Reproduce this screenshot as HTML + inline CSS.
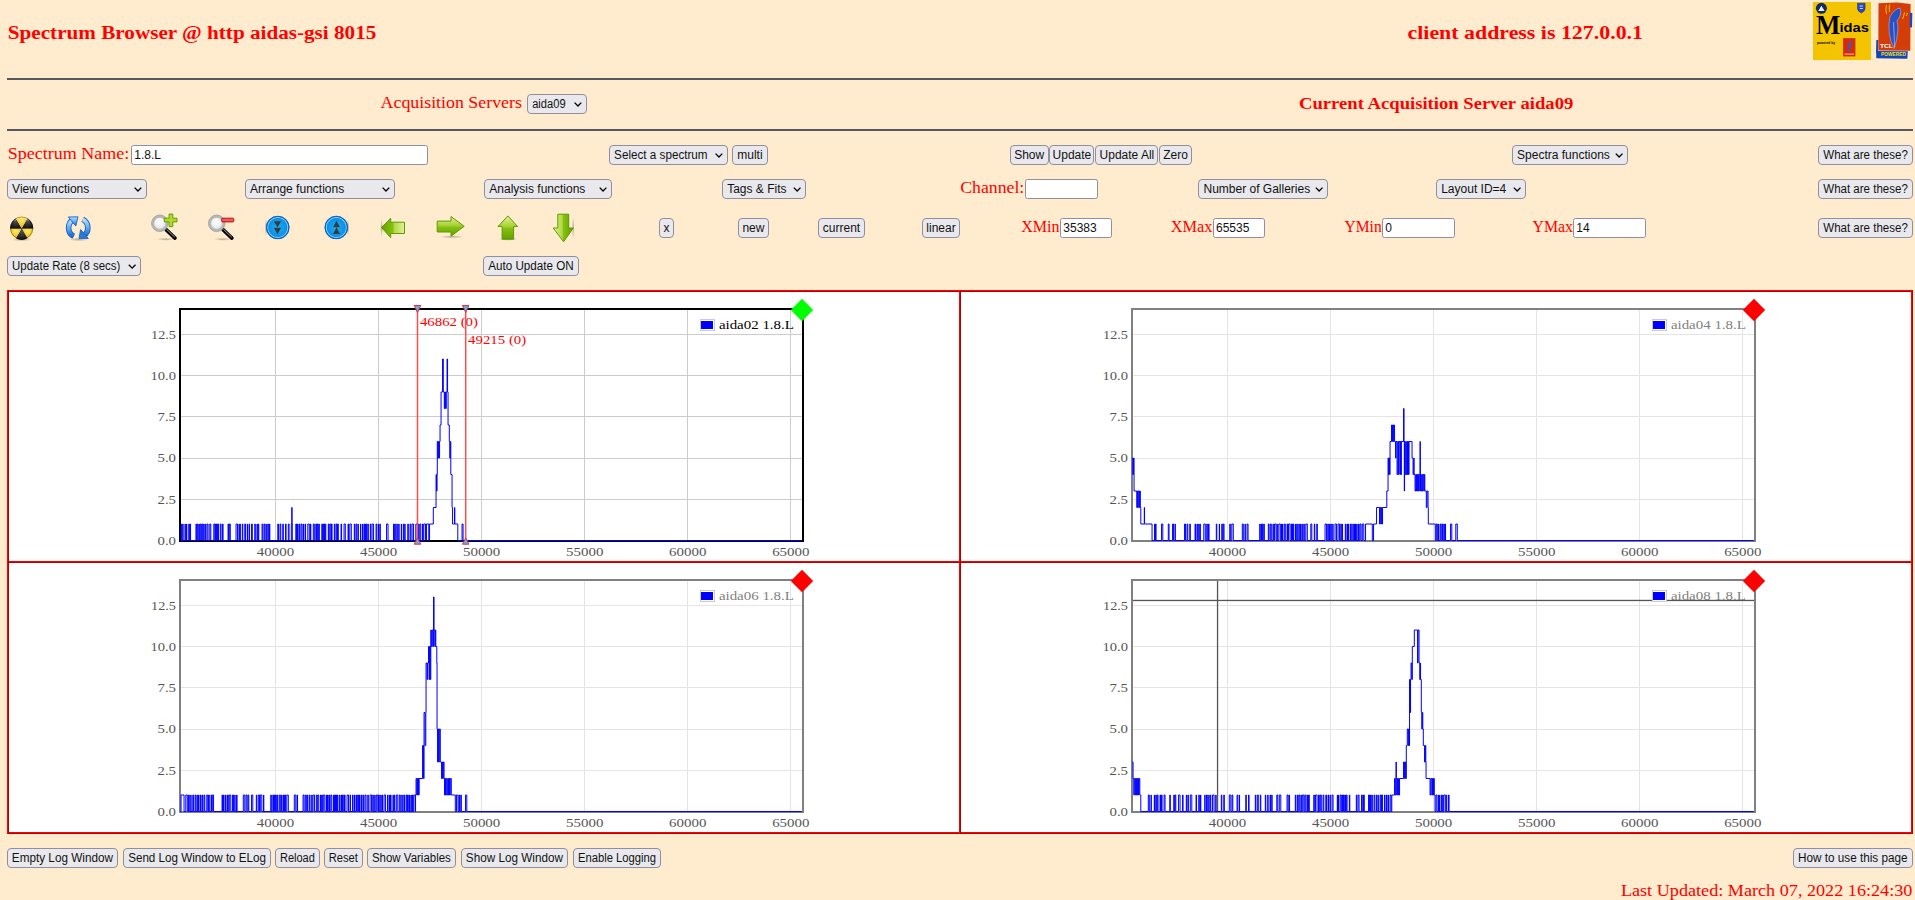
<!DOCTYPE html>
<html><head><meta charset="utf-8"><title>Spectrum Browser</title>
<style>html,body{margin:0;padding:0;background:#FFEBCD;overflow:hidden;width:1915px;height:900px}</style>
</head><body>
<svg width="1915" height="900" viewBox="0 0 1915 900" style="display:block">
<defs><linearGradient id="gArrowH" x1="0" y1="0" x2="0" y2="1"><stop offset="0" stop-color="#d8ec8a"/><stop offset="0.5" stop-color="#9fcc2a"/><stop offset="1" stop-color="#6aa300"/></linearGradient><linearGradient id="gArrowL" x1="0" y1="0" x2="1" y2="0"><stop offset="0" stop-color="#6aa300"/><stop offset="0.5" stop-color="#9fcc2a"/><stop offset="1" stop-color="#d8ec8a"/></linearGradient><linearGradient id="gArrowV" x1="0" y1="0" x2="1" y2="0"><stop offset="0" stop-color="#c6e06a"/><stop offset="0.5" stop-color="#8cc21a"/><stop offset="1" stop-color="#6aa300"/></linearGradient><radialGradient id="gBlue" cx="0.4" cy="0.35" r="0.7"><stop offset="0" stop-color="#5ec8ff"/><stop offset="0.7" stop-color="#1a8fe0"/><stop offset="1" stop-color="#0a5fb0"/></radialGradient><radialGradient id="gLens" cx="0.4" cy="0.35" r="0.7"><stop offset="0" stop-color="#ffffff"/><stop offset="1" stop-color="#d8d8d8"/></radialGradient><linearGradient id="gRefresh" x1="0" y1="0" x2="0" y2="1"><stop offset="0" stop-color="#9fd4ff"/><stop offset="1" stop-color="#1874d0"/></linearGradient></defs>
<rect x="0" y="0" width="1915" height="900" fill="#FFEBCD"/>
<text x="7.80" y="39.10" font-family="Liberation Serif" font-size="18.7" font-weight="bold" fill="#ff0000" text-anchor="start" textLength="368.50" lengthAdjust="spacingAndGlyphs">Spectrum Browser @ http aidas-gsi 8015</text>
<text x="1407.50" y="39.00" font-family="Liberation Serif" font-size="18.7" font-weight="bold" fill="#ff0000" text-anchor="start" textLength="235.50" lengthAdjust="spacingAndGlyphs">client address is 127.0.0.1</text>
<rect x="7" y="78" width="1906" height="2" fill="#55585e"/>
<rect x="7" y="129" width="1906" height="2" fill="#55585e"/>
<text x="380.60" y="108.00" font-family="Liberation Serif" font-size="16.5" font-weight="normal" fill="#ff0000" text-anchor="start" textLength="141.30" lengthAdjust="spacingAndGlyphs">Acquisition Servers</text>
<rect x="527.5" y="94.5" width="59" height="19" rx="3.5" fill="#e9e9ed" stroke="#8f8f9d" stroke-width="1"/>
<text x="532.20" y="107.80" font-family="Liberation Sans" font-size="12" font-weight="normal" fill="#111" text-anchor="start" textLength="33.40" lengthAdjust="spacingAndGlyphs">aida09</text>
<path d="M574.60 102.60 L577.95 106.05 L581.30 102.60" fill="none" stroke="#000" stroke-width="1.35"/>
<text x="1299.00" y="109.10" font-family="Liberation Serif" font-size="16.8" font-weight="bold" fill="#ff0000" text-anchor="start" textLength="274.30" lengthAdjust="spacingAndGlyphs">Current Acquisition Server aida09</text>
<text x="7.80" y="158.70" font-family="Liberation Serif" font-size="16.5" font-weight="normal" fill="#ff0000" text-anchor="start" textLength="121.40" lengthAdjust="spacingAndGlyphs">Spectrum Name:</text>
<rect x="131.5" y="145.5" width="296" height="19" rx="2" fill="#fff" stroke="#8f8f9d" stroke-width="1"/>
<text x="134.30" y="158.70" font-family="Liberation Sans" font-size="12" font-weight="normal" fill="#111" text-anchor="start">1.8.L</text>
<rect x="609.5" y="145.5" width="118" height="19" rx="3.5" fill="#e9e9ed" stroke="#8f8f9d" stroke-width="1"/>
<text x="614.10" y="158.80" font-family="Liberation Sans" font-size="12" font-weight="normal" fill="#111" text-anchor="start" textLength="93.50" lengthAdjust="spacingAndGlyphs">Select a spectrum</text>
<path d="M715.60 153.60 L718.95 157.05 L722.30 153.60" fill="none" stroke="#000" stroke-width="1.35"/>
<rect x="732.5" y="145.5" width="35" height="19" rx="3.5" fill="#e9e9ed" stroke="#8f8f9d" stroke-width="1"/>
<text x="749.90" y="158.80" font-family="Liberation Sans" font-size="12" font-weight="normal" fill="#111" text-anchor="middle">multi</text>
<rect x="1010.5" y="145.5" width="38" height="19" rx="3.5" fill="#e9e9ed" stroke="#8f8f9d" stroke-width="1"/>
<text x="1029.20" y="158.80" font-family="Liberation Sans" font-size="12" font-weight="normal" fill="#111" text-anchor="middle">Show</text>
<rect x="1049.5" y="145.5" width="44" height="19" rx="3.5" fill="#e9e9ed" stroke="#8f8f9d" stroke-width="1"/>
<text x="1071.90" y="158.80" font-family="Liberation Sans" font-size="12" font-weight="normal" fill="#111" text-anchor="middle">Update</text>
<rect x="1095.5" y="145.5" width="62" height="19" rx="3.5" fill="#e9e9ed" stroke="#8f8f9d" stroke-width="1"/>
<text x="1126.90" y="158.80" font-family="Liberation Sans" font-size="12" font-weight="normal" fill="#111" text-anchor="middle">Update All</text>
<rect x="1159.5" y="145.5" width="32" height="19" rx="3.5" fill="#e9e9ed" stroke="#8f8f9d" stroke-width="1"/>
<text x="1175.55" y="158.80" font-family="Liberation Sans" font-size="12" font-weight="normal" fill="#111" text-anchor="middle">Zero</text>
<rect x="1512.5" y="145.5" width="115" height="19" rx="3.5" fill="#e9e9ed" stroke="#8f8f9d" stroke-width="1"/>
<text x="1517.10" y="158.80" font-family="Liberation Sans" font-size="12" font-weight="normal" fill="#111" text-anchor="start">Spectra functions</text>
<path d="M1615.80 153.60 L1619.15 157.05 L1622.50 153.60" fill="none" stroke="#000" stroke-width="1.35"/>
<rect x="1818.5" y="145.5" width="94" height="19" rx="3.5" fill="#e9e9ed" stroke="#8f8f9d" stroke-width="1"/>
<text x="1865.55" y="158.80" font-family="Liberation Sans" font-size="12" font-weight="normal" fill="#111" text-anchor="middle" textLength="84.50" lengthAdjust="spacingAndGlyphs">What are these?</text>
<rect x="7.5" y="179.5" width="139" height="19" rx="3.5" fill="#e9e9ed" stroke="#8f8f9d" stroke-width="1"/>
<text x="12.10" y="192.80" font-family="Liberation Sans" font-size="12" font-weight="normal" fill="#111" text-anchor="start">View functions</text>
<path d="M134.60 187.60 L137.95 191.05 L141.30 187.60" fill="none" stroke="#000" stroke-width="1.35"/>
<rect x="245.5" y="179.5" width="149" height="19" rx="3.5" fill="#e9e9ed" stroke="#8f8f9d" stroke-width="1"/>
<text x="250.10" y="192.80" font-family="Liberation Sans" font-size="12" font-weight="normal" fill="#111" text-anchor="start">Arrange functions</text>
<path d="M382.60 187.60 L385.95 191.05 L389.30 187.60" fill="none" stroke="#000" stroke-width="1.35"/>
<rect x="484.5" y="179.5" width="127" height="19" rx="3.5" fill="#e9e9ed" stroke="#8f8f9d" stroke-width="1"/>
<text x="489.30" y="192.80" font-family="Liberation Sans" font-size="12" font-weight="normal" fill="#111" text-anchor="start">Analysis functions</text>
<path d="M599.70 187.60 L603.05 191.05 L606.40 187.60" fill="none" stroke="#000" stroke-width="1.35"/>
<rect x="722.5" y="179.5" width="83" height="19" rx="3.5" fill="#e9e9ed" stroke="#8f8f9d" stroke-width="1"/>
<text x="727.20" y="192.80" font-family="Liberation Sans" font-size="12" font-weight="normal" fill="#111" text-anchor="start">Tags &amp; Fits</text>
<path d="M793.80 187.60 L797.15 191.05 L800.50 187.60" fill="none" stroke="#000" stroke-width="1.35"/>
<text x="960.20" y="193.00" font-family="Liberation Serif" font-size="16.5" font-weight="normal" fill="#ff0000" text-anchor="start" textLength="64.10" lengthAdjust="spacingAndGlyphs">Channel:</text>
<rect x="1025.5" y="179.5" width="72" height="19" rx="2" fill="#fff" stroke="#8f8f9d" stroke-width="1"/>
<rect x="1198.5" y="179.5" width="129" height="19" rx="3.5" fill="#e9e9ed" stroke="#8f8f9d" stroke-width="1"/>
<text x="1203.50" y="192.80" font-family="Liberation Sans" font-size="12" font-weight="normal" fill="#111" text-anchor="start">Number of Galleries</text>
<path d="M1315.80 187.60 L1319.15 191.05 L1322.50 187.60" fill="none" stroke="#000" stroke-width="1.35"/>
<rect x="1436.5" y="179.5" width="89" height="19" rx="3.5" fill="#e9e9ed" stroke="#8f8f9d" stroke-width="1"/>
<text x="1441.20" y="192.80" font-family="Liberation Sans" font-size="12" font-weight="normal" fill="#111" text-anchor="start">Layout ID=4</text>
<path d="M1513.80 187.60 L1517.15 191.05 L1520.50 187.60" fill="none" stroke="#000" stroke-width="1.35"/>
<rect x="1818.5" y="179.5" width="94" height="19" rx="3.5" fill="#e9e9ed" stroke="#8f8f9d" stroke-width="1"/>
<text x="1865.55" y="192.80" font-family="Liberation Sans" font-size="12" font-weight="normal" fill="#111" text-anchor="middle" textLength="84.50" lengthAdjust="spacingAndGlyphs">What are these?</text>
<rect x="659.5" y="218.5" width="14" height="19" rx="3.5" fill="#e9e9ed" stroke="#8f8f9d" stroke-width="1"/>
<text x="666.45" y="231.80" font-family="Liberation Sans" font-size="12" font-weight="normal" fill="#111" text-anchor="middle">x</text>
<rect x="738.5" y="218.5" width="30" height="19" rx="3.5" fill="#e9e9ed" stroke="#8f8f9d" stroke-width="1"/>
<text x="753.40" y="231.80" font-family="Liberation Sans" font-size="12" font-weight="normal" fill="#111" text-anchor="middle">new</text>
<rect x="818.5" y="218.5" width="46" height="19" rx="3.5" fill="#e9e9ed" stroke="#8f8f9d" stroke-width="1"/>
<text x="841.50" y="231.80" font-family="Liberation Sans" font-size="12" font-weight="normal" fill="#111" text-anchor="middle">current</text>
<rect x="922.5" y="218.5" width="37" height="19" rx="3.5" fill="#e9e9ed" stroke="#8f8f9d" stroke-width="1"/>
<text x="941.00" y="231.80" font-family="Liberation Sans" font-size="12" font-weight="normal" fill="#111" text-anchor="middle">linear</text>
<text x="1021.30" y="231.90" font-family="Liberation Serif" font-size="16.3" font-weight="normal" fill="#ff0000" text-anchor="start" textLength="38.30" lengthAdjust="spacingAndGlyphs">XMin</text>
<rect x="1060.5" y="218.5" width="51" height="19" rx="2" fill="#fff" stroke="#8f8f9d" stroke-width="1"/>
<text x="1063.30" y="231.80" font-family="Liberation Sans" font-size="12" font-weight="normal" fill="#111" text-anchor="start">35383</text>
<text x="1170.70" y="231.90" font-family="Liberation Serif" font-size="16.3" font-weight="normal" fill="#ff0000" text-anchor="start" textLength="41.60" lengthAdjust="spacingAndGlyphs">XMax</text>
<rect x="1213.5" y="218.5" width="51" height="19" rx="2" fill="#fff" stroke="#8f8f9d" stroke-width="1"/>
<text x="1216.00" y="231.80" font-family="Liberation Sans" font-size="12" font-weight="normal" fill="#111" text-anchor="start">65535</text>
<text x="1344.60" y="231.90" font-family="Liberation Serif" font-size="16.3" font-weight="normal" fill="#ff0000" text-anchor="start" textLength="37.10" lengthAdjust="spacingAndGlyphs">YMin</text>
<rect x="1382.5" y="218.5" width="72" height="19" rx="2" fill="#fff" stroke="#8f8f9d" stroke-width="1"/>
<text x="1385.20" y="231.80" font-family="Liberation Sans" font-size="12" font-weight="normal" fill="#111" text-anchor="start">0</text>
<text x="1532.50" y="231.90" font-family="Liberation Serif" font-size="16.3" font-weight="normal" fill="#ff0000" text-anchor="start" textLength="40.50" lengthAdjust="spacingAndGlyphs">YMax</text>
<rect x="1573.5" y="218.5" width="72" height="19" rx="2" fill="#fff" stroke="#8f8f9d" stroke-width="1"/>
<text x="1576.30" y="231.80" font-family="Liberation Sans" font-size="12" font-weight="normal" fill="#111" text-anchor="start">14</text>
<rect x="1818.5" y="218.5" width="94" height="19" rx="3.5" fill="#e9e9ed" stroke="#8f8f9d" stroke-width="1"/>
<text x="1865.55" y="231.80" font-family="Liberation Sans" font-size="12" font-weight="normal" fill="#111" text-anchor="middle" textLength="84.50" lengthAdjust="spacingAndGlyphs">What are these?</text>
<rect x="7.5" y="256.5" width="133" height="19" rx="3.5" fill="#e9e9ed" stroke="#8f8f9d" stroke-width="1"/>
<text x="12.10" y="269.90" font-family="Liberation Sans" font-size="12" font-weight="normal" fill="#111" text-anchor="start" textLength="108.20" lengthAdjust="spacingAndGlyphs">Update Rate (8 secs)</text>
<path d="M128.80 264.70 L132.15 268.15 L135.50 264.70" fill="none" stroke="#000" stroke-width="1.35"/>
<rect x="483.5" y="256.5" width="95" height="19" rx="3.5" fill="#e9e9ed" stroke="#8f8f9d" stroke-width="1"/>
<text x="530.95" y="269.90" font-family="Liberation Sans" font-size="12" font-weight="normal" fill="#111" text-anchor="middle" textLength="85.50" lengthAdjust="spacingAndGlyphs">Auto Update ON</text>
<rect x="7.5" y="848.5" width="110" height="19" rx="3.5" fill="#e9e9ed" stroke="#8f8f9d" stroke-width="1"/>
<text x="62.40" y="861.90" font-family="Liberation Sans" font-size="12" font-weight="normal" fill="#111" text-anchor="middle" textLength="101.10" lengthAdjust="spacingAndGlyphs">Empty Log Window</text>
<rect x="123.5" y="848.5" width="147" height="19" rx="3.5" fill="#e9e9ed" stroke="#8f8f9d" stroke-width="1"/>
<text x="197.10" y="861.90" font-family="Liberation Sans" font-size="12" font-weight="normal" fill="#111" text-anchor="middle" textLength="137.90" lengthAdjust="spacingAndGlyphs">Send Log Window to ELog</text>
<rect x="275.5" y="848.5" width="44" height="19" rx="3.5" fill="#e9e9ed" stroke="#8f8f9d" stroke-width="1"/>
<text x="297.40" y="861.90" font-family="Liberation Sans" font-size="12" font-weight="normal" fill="#111" text-anchor="middle" textLength="34.90" lengthAdjust="spacingAndGlyphs">Reload</text>
<rect x="324.5" y="848.5" width="38" height="19" rx="3.5" fill="#e9e9ed" stroke="#8f8f9d" stroke-width="1"/>
<text x="343.30" y="861.90" font-family="Liberation Sans" font-size="12" font-weight="normal" fill="#111" text-anchor="middle" textLength="29.10" lengthAdjust="spacingAndGlyphs">Reset</text>
<rect x="367.5" y="848.5" width="88" height="19" rx="3.5" fill="#e9e9ed" stroke="#8f8f9d" stroke-width="1"/>
<text x="411.40" y="861.90" font-family="Liberation Sans" font-size="12" font-weight="normal" fill="#111" text-anchor="middle" textLength="78.90" lengthAdjust="spacingAndGlyphs">Show Variables</text>
<rect x="461.5" y="848.5" width="106" height="19" rx="3.5" fill="#e9e9ed" stroke="#8f8f9d" stroke-width="1"/>
<text x="514.40" y="861.90" font-family="Liberation Sans" font-size="12" font-weight="normal" fill="#111" text-anchor="middle" textLength="97.10" lengthAdjust="spacingAndGlyphs">Show Log Window</text>
<rect x="573.5" y="848.5" width="87" height="19" rx="3.5" fill="#e9e9ed" stroke="#8f8f9d" stroke-width="1"/>
<text x="617.05" y="861.90" font-family="Liberation Sans" font-size="12" font-weight="normal" fill="#111" text-anchor="middle" textLength="78.20" lengthAdjust="spacingAndGlyphs">Enable Logging</text>
<rect x="1793.5" y="848.5" width="119" height="19" rx="3.5" fill="#e9e9ed" stroke="#8f8f9d" stroke-width="1"/>
<text x="1852.80" y="861.90" font-family="Liberation Sans" font-size="12" font-weight="normal" fill="#111" text-anchor="middle" textLength="109.70" lengthAdjust="spacingAndGlyphs">How to use this page</text>
<text x="1620.90" y="895.70" font-family="Liberation Serif" font-size="16.5" font-weight="normal" fill="#ff0000" text-anchor="start" textLength="291.50" lengthAdjust="spacingAndGlyphs">Last Updated: March 07, 2022 16:24:30</text>
<rect x="9" y="292" width="1902" height="540" fill="#fff"/>
<rect x="7" y="290" width="1906" height="1" fill="#ff0000"/><rect x="7" y="291" width="1906" height="1" fill="#b40000"/>
<rect x="7" y="832" width="1906" height="1" fill="#ff0000"/><rect x="7" y="833" width="1906" height="1" fill="#b40000"/>
<rect x="7" y="561" width="1906" height="1" fill="#ff0000"/><rect x="7" y="562" width="1906" height="1" fill="#b40000"/>
<rect x="7" y="290" width="1" height="544" fill="#ff0000"/><rect x="8" y="290" width="1" height="544" fill="#b40000"/>
<rect x="959" y="290" width="1" height="544" fill="#ff0000"/><rect x="960" y="290" width="1" height="544" fill="#b40000"/>
<rect x="1911" y="290" width="1" height="544" fill="#ff0000"/><rect x="1912" y="290" width="1" height="544" fill="#b40000"/>
<rect x="275" y="309" width="1" height="232" fill="#cccccc"/>
<rect x="378" y="309" width="1" height="232" fill="#cccccc"/>
<rect x="481" y="309" width="1" height="232" fill="#cccccc"/>
<rect x="584" y="309" width="1" height="232" fill="#cccccc"/>
<rect x="687" y="309" width="1" height="232" fill="#cccccc"/>
<rect x="790" y="309" width="1" height="232" fill="#cccccc"/>
<rect x="180" y="499" width="623" height="1" fill="#cccccc"/>
<rect x="180" y="458" width="623" height="1" fill="#cccccc"/>
<rect x="180" y="416" width="623" height="1" fill="#cccccc"/>
<rect x="180" y="375" width="623" height="1" fill="#cccccc"/>
<rect x="180" y="334" width="623" height="1" fill="#cccccc"/>
<text x="157.50" y="544.90" font-family="Liberation Serif" font-size="11.5" font-weight="normal" fill="#555" text-anchor="start" textLength="18.50" lengthAdjust="spacingAndGlyphs">0.0</text>
<text x="157.50" y="503.65" font-family="Liberation Serif" font-size="11.5" font-weight="normal" fill="#555" text-anchor="start" textLength="18.50" lengthAdjust="spacingAndGlyphs">2.5</text>
<text x="157.50" y="462.40" font-family="Liberation Serif" font-size="11.5" font-weight="normal" fill="#555" text-anchor="start" textLength="18.50" lengthAdjust="spacingAndGlyphs">5.0</text>
<text x="157.50" y="421.15" font-family="Liberation Serif" font-size="11.5" font-weight="normal" fill="#555" text-anchor="start" textLength="18.50" lengthAdjust="spacingAndGlyphs">7.5</text>
<text x="150.50" y="379.90" font-family="Liberation Serif" font-size="11.5" font-weight="normal" fill="#555" text-anchor="start" textLength="25.50" lengthAdjust="spacingAndGlyphs">10.0</text>
<text x="151.00" y="338.65" font-family="Liberation Serif" font-size="11.5" font-weight="normal" fill="#555" text-anchor="start" textLength="25.00" lengthAdjust="spacingAndGlyphs">12.5</text>
<text x="256.87" y="556.00" font-family="Liberation Serif" font-size="11.5" font-weight="normal" fill="#555" text-anchor="start" textLength="37.30" lengthAdjust="spacingAndGlyphs">40000</text>
<text x="359.93" y="556.00" font-family="Liberation Serif" font-size="11.5" font-weight="normal" fill="#555" text-anchor="start" textLength="37.30" lengthAdjust="spacingAndGlyphs">45000</text>
<text x="462.99" y="556.00" font-family="Liberation Serif" font-size="11.5" font-weight="normal" fill="#555" text-anchor="start" textLength="37.30" lengthAdjust="spacingAndGlyphs">50000</text>
<text x="566.05" y="556.00" font-family="Liberation Serif" font-size="11.5" font-weight="normal" fill="#555" text-anchor="start" textLength="37.30" lengthAdjust="spacingAndGlyphs">55000</text>
<text x="669.11" y="556.00" font-family="Liberation Serif" font-size="11.5" font-weight="normal" fill="#555" text-anchor="start" textLength="37.30" lengthAdjust="spacingAndGlyphs">60000</text>
<text x="772.17" y="556.00" font-family="Liberation Serif" font-size="11.5" font-weight="normal" fill="#555" text-anchor="start" textLength="37.30" lengthAdjust="spacingAndGlyphs">65000</text>
<rect x="180" y="309" width="623" height="232" fill="none" stroke="#000" stroke-width="2"/>
<path d="M180.30 540.50H181.30V524.00H181.80V540.50H182.80V524.00H183.05V540.50H185.05V524.00H185.30V540.50H186.55V524.00H186.80V540.50H188.80V524.00H189.30V540.50H190.05V524.00H190.55V540.50H196.05V524.00H196.30V540.50H197.30V524.00H198.05V540.50H199.05V524.00H199.30V540.50H200.30V524.00H201.30V540.50H202.05V524.00H202.80V540.50H203.80V524.00H204.05V540.50H205.30V524.00H205.80V540.50H207.05V524.00H208.05V540.50H209.80V524.00H210.80V540.50H213.80V524.00H214.80V540.50H215.55V524.00H216.55V540.50H217.55V524.00H218.55V540.50H220.30V524.00H221.05V540.50H222.55V524.00H223.05V540.50H228.05V524.00H228.55V540.50H229.30V524.00H230.30V540.50H236.05V524.00H237.55V540.50H239.05V524.00H239.30V540.50H240.05V524.00H240.30V540.50H242.30V524.00H242.80V540.50H244.80V524.00H245.55V540.50H247.30V524.00H247.55V540.50H249.05V524.00H249.55V540.50H251.55V524.00H252.30V540.50H254.80V524.00H255.30V540.50H257.05V524.00H257.30V540.50H258.30V524.00H258.80V540.50H262.05V524.00H262.80V540.50H264.05V524.00H264.80V540.50H266.05V524.00H266.30V540.50H267.80V524.00H268.30V540.50H269.55V524.00H269.80V540.50H277.80V524.00H278.55V540.50H280.05V524.00H280.80V540.50H282.80V524.00H283.30V540.50H285.55V524.00H286.05V540.50H288.30V524.00H289.05V540.50H291.30V524.00H291.80V507.50H292.05V524.00H292.30V540.50H295.80V524.00H296.55V540.50H297.55V524.00H298.05V540.50H299.30V524.00H299.80V540.50H301.05V524.00H302.05V540.50H303.30V524.00H303.55V540.50H305.05V524.00H305.55V540.50H307.80V524.00H309.30V540.50H310.55V524.00H310.80V540.50H313.30V524.00H314.30V540.50H315.80V524.00H316.55V540.50H317.30V524.00H318.05V540.50H318.80V524.00H319.30V540.50H321.80V524.00H322.55V540.50H323.55V524.00H324.55V540.50H325.30V524.00H325.80V540.50H328.30V524.00H328.80V540.50H329.80V524.00H330.80V540.50H331.55V524.00H332.05V540.50H334.30V524.00H334.80V540.50H336.05V524.00H336.80V540.50H337.55V524.00H338.30V540.50H341.05V524.00H341.55V540.50H344.05V524.00H345.30V540.50H348.05V524.00H348.55V540.50H349.80V524.00H351.30V540.50H354.30V524.00H354.80V540.50H356.05V524.00H356.80V540.50H358.05V524.00H358.30V540.50H360.55V524.00H360.80V540.50H362.55V524.00H362.80V540.50H364.05V524.00H364.55V540.50H365.55V524.00H366.55V540.50H367.80V524.00H368.30V540.50H370.30V524.00H370.80V540.50H372.05V524.00H373.55V540.50H376.05V524.00H376.80V540.50H378.30V524.00H378.55V540.50H379.80V524.00H380.30V540.50H386.55V524.00H388.05V540.50H393.55V524.00H394.05V540.50H394.80V524.00H395.30V540.50H396.80V524.00H397.30V540.50H398.80V524.00H399.05V540.50H401.30V524.00H401.55V540.50H403.30V524.00H403.80V540.50H404.80V524.00H405.05V540.50H407.80V524.00H408.30V540.50H410.05V524.00H410.80V540.50H412.05V524.00H413.55V540.50H415.80V524.00H417.30V540.50H418.30V524.00H418.80V540.50H419.80V524.00H420.80V540.50H422.55V524.00H423.05V540.50H423.80V524.00H425.55V540.50H426.55V524.00H428.80V540.50H429.55V524.00H433.30V507.50H436.05V474.50H436.55V491.00H437.05V474.50H437.30V441.50H437.80V458.00H438.30V441.50H438.80V458.00H439.55V441.50H440.05V425.00H441.05V392.00H442.55V359.00H443.30V392.00H444.30V408.50H444.80V392.00H445.55V408.50H446.30V392.00H447.05V359.00H447.55V392.00H448.05V425.00H449.30V441.50H449.80V458.00H450.30V441.50H450.80V474.50H452.05V507.50H452.55V524.00H454.55V507.50H454.80V524.00H457.80V540.50H462.05V524.00H463.05V540.50H801.80" fill="none" stroke="#0000ff" stroke-width="1"/>
<rect x="416.75" y="306" width="1.5" height="236" fill="#ff4d4d"/>
<path d="M414.3 305.5 L420.7 305.5 L417.5 312.5 Z" fill="#6aaedc" stroke="#e03040" stroke-width="1"/>
<path d="M414.3 544.2 L420.7 544.2 L417.5 537.8 Z" fill="#6aaedc" stroke="#e03040" stroke-width="1"/>
<text x="419.90" y="325.80" font-family="Liberation Serif" font-size="11.5" font-weight="normal" fill="#ff0000" text-anchor="start" textLength="58.10" lengthAdjust="spacingAndGlyphs">46862 (0)</text>
<rect x="464.95" y="306" width="1.5" height="236" fill="#ff4d4d"/>
<path d="M462.5 305.5 L468.9 305.5 L465.7 312.5 Z" fill="#6aaedc" stroke="#e03040" stroke-width="1"/>
<path d="M462.5 544.2 L468.9 544.2 L465.7 537.8 Z" fill="#6aaedc" stroke="#e03040" stroke-width="1"/>
<text x="468.10" y="343.60" font-family="Liberation Serif" font-size="11.5" font-weight="normal" fill="#ff0000" text-anchor="start" textLength="58.10" lengthAdjust="spacingAndGlyphs">49215 (0)</text>
<rect x="700.5" y="319.5" width="14" height="11" fill="#fff" stroke="#ccc" stroke-width="1"/>
<rect x="701" y="321" width="12" height="8" fill="#0000ff"/>
<text x="718.90" y="328.70" font-family="Liberation Serif" font-size="11.5" font-weight="normal" fill="#000" text-anchor="start" textLength="75.00" lengthAdjust="spacingAndGlyphs">aida02 1.8.L</text>
<path d="M802 298.8 L813.2 310 L802 321.2 L790.8 310 Z" fill="#00ff00"/>
<rect x="1227" y="309" width="1" height="232" fill="#e4e4e4"/>
<rect x="1330" y="309" width="1" height="232" fill="#e4e4e4"/>
<rect x="1433" y="309" width="1" height="232" fill="#e4e4e4"/>
<rect x="1536" y="309" width="1" height="232" fill="#e4e4e4"/>
<rect x="1639" y="309" width="1" height="232" fill="#e4e4e4"/>
<rect x="1742" y="309" width="1" height="232" fill="#e4e4e4"/>
<rect x="1132" y="499" width="623" height="1" fill="#e4e4e4"/>
<rect x="1132" y="458" width="623" height="1" fill="#e4e4e4"/>
<rect x="1132" y="416" width="623" height="1" fill="#e4e4e4"/>
<rect x="1132" y="375" width="623" height="1" fill="#e4e4e4"/>
<rect x="1132" y="334" width="623" height="1" fill="#e4e4e4"/>
<text x="1109.50" y="544.90" font-family="Liberation Serif" font-size="11.5" font-weight="normal" fill="#555" text-anchor="start" textLength="18.50" lengthAdjust="spacingAndGlyphs">0.0</text>
<text x="1109.50" y="503.65" font-family="Liberation Serif" font-size="11.5" font-weight="normal" fill="#555" text-anchor="start" textLength="18.50" lengthAdjust="spacingAndGlyphs">2.5</text>
<text x="1109.50" y="462.40" font-family="Liberation Serif" font-size="11.5" font-weight="normal" fill="#555" text-anchor="start" textLength="18.50" lengthAdjust="spacingAndGlyphs">5.0</text>
<text x="1109.50" y="421.15" font-family="Liberation Serif" font-size="11.5" font-weight="normal" fill="#555" text-anchor="start" textLength="18.50" lengthAdjust="spacingAndGlyphs">7.5</text>
<text x="1102.50" y="379.90" font-family="Liberation Serif" font-size="11.5" font-weight="normal" fill="#555" text-anchor="start" textLength="25.50" lengthAdjust="spacingAndGlyphs">10.0</text>
<text x="1103.00" y="338.65" font-family="Liberation Serif" font-size="11.5" font-weight="normal" fill="#555" text-anchor="start" textLength="25.00" lengthAdjust="spacingAndGlyphs">12.5</text>
<text x="1208.87" y="556.00" font-family="Liberation Serif" font-size="11.5" font-weight="normal" fill="#555" text-anchor="start" textLength="37.30" lengthAdjust="spacingAndGlyphs">40000</text>
<text x="1311.93" y="556.00" font-family="Liberation Serif" font-size="11.5" font-weight="normal" fill="#555" text-anchor="start" textLength="37.30" lengthAdjust="spacingAndGlyphs">45000</text>
<text x="1414.99" y="556.00" font-family="Liberation Serif" font-size="11.5" font-weight="normal" fill="#555" text-anchor="start" textLength="37.30" lengthAdjust="spacingAndGlyphs">50000</text>
<text x="1518.05" y="556.00" font-family="Liberation Serif" font-size="11.5" font-weight="normal" fill="#555" text-anchor="start" textLength="37.30" lengthAdjust="spacingAndGlyphs">55000</text>
<text x="1621.11" y="556.00" font-family="Liberation Serif" font-size="11.5" font-weight="normal" fill="#555" text-anchor="start" textLength="37.30" lengthAdjust="spacingAndGlyphs">60000</text>
<text x="1724.17" y="556.00" font-family="Liberation Serif" font-size="11.5" font-weight="normal" fill="#555" text-anchor="start" textLength="37.30" lengthAdjust="spacingAndGlyphs">65000</text>
<rect x="1132" y="309" width="623" height="232" fill="none" stroke="#808080" stroke-width="2"/>
<path d="M1132.30 458.00H1132.80V474.50H1133.55V458.00H1134.05V491.00H1136.80V507.50H1137.30V491.00H1137.80V507.50H1138.30V491.00H1139.30V507.50H1139.80V491.00H1140.30V507.50H1140.80V524.00H1144.30V507.50H1144.55V524.00H1152.05V540.50H1154.55V524.00H1154.80V540.50H1155.55V524.00H1156.05V540.50H1161.55V524.00H1162.80V540.50H1168.30V524.00H1169.05V540.50H1172.55V524.00H1173.55V540.50H1175.05V524.00H1175.30V540.50H1184.55V524.00H1185.55V540.50H1187.05V524.00H1187.80V540.50H1189.80V524.00H1190.30V540.50H1195.05V524.00H1195.55V540.50H1197.05V524.00H1197.30V540.50H1198.80V524.00H1199.05V540.50H1200.05V524.00H1200.30V540.50H1203.80V524.00H1205.30V540.50H1206.80V524.00H1207.30V540.50H1208.55V524.00H1209.05V540.50H1216.30V524.00H1216.80V540.50H1219.30V524.00H1219.55V540.50H1221.80V524.00H1222.30V540.50H1223.30V524.00H1224.05V540.50H1229.80V524.00H1230.30V540.50H1231.80V524.00H1233.30V540.50H1242.30V524.00H1243.30V540.50H1245.05V524.00H1245.30V540.50H1247.05V524.00H1248.05V540.50H1259.80V524.00H1260.05V540.50H1261.05V524.00H1261.55V540.50H1262.30V524.00H1262.80V540.50H1263.80V524.00H1264.30V540.50H1268.30V524.00H1269.05V540.50H1270.30V524.00H1271.30V540.50H1273.05V524.00H1273.30V540.50H1274.55V524.00H1276.05V540.50H1277.05V524.00H1277.30V540.50H1278.80V524.00H1280.30V540.50H1281.30V524.00H1281.55V540.50H1282.55V524.00H1282.80V540.50H1284.30V524.00H1285.30V540.50H1287.05V524.00H1287.55V540.50H1288.55V524.00H1290.05V540.50H1291.30V524.00H1291.80V540.50H1292.05V524.00H1292.55V540.50H1293.30V524.00H1293.80V540.50H1295.55V524.00H1295.80V540.50H1296.80V524.00H1297.30V540.50H1298.80V524.00H1299.30V540.50H1300.55V524.00H1300.80V540.50H1302.05V524.00H1302.30V540.50H1303.80V524.00H1304.30V540.50H1305.80V524.00H1307.30V540.50H1310.80V524.00H1311.80V540.50H1314.30V524.00H1314.80V540.50H1316.80V524.00H1317.30V540.50H1325.05V524.00H1326.55V540.50H1327.80V524.00H1328.30V540.50H1329.55V524.00H1329.80V540.50H1330.80V524.00H1331.30V540.50H1332.80V524.00H1333.05V540.50H1335.05V524.00H1336.55V540.50H1338.05V524.00H1339.55V540.50H1340.80V524.00H1341.30V540.50H1342.30V524.00H1342.55V540.50H1345.30V524.00H1345.80V540.50H1347.05V524.00H1347.55V540.50H1348.55V524.00H1348.80V540.50H1350.55V524.00H1351.30V540.50H1352.80V524.00H1353.30V540.50H1354.55V524.00H1354.80V540.50H1355.55V524.00H1355.80V540.50H1356.80V524.00H1357.05V540.50H1358.55V524.00H1359.05V540.50H1360.05V524.00H1361.05V540.50H1362.30V524.00H1363.80V540.50H1365.55V524.00H1372.30V540.50H1373.55V524.00H1376.55V507.50H1379.55V524.00H1380.05V507.50H1380.80V524.00H1381.30V507.50H1381.80V524.00H1382.55V507.50H1386.80V491.00H1388.05V458.00H1388.55V474.50H1389.05V458.00H1389.55V474.50H1390.05V441.50H1391.55V425.00H1392.05V441.50H1392.55V425.00H1393.30V441.50H1393.80V425.00H1394.55V441.50H1395.55V458.00H1396.05V441.50H1397.05V474.50H1397.80V441.50H1398.55V474.50H1399.05V441.50H1400.05V474.50H1400.55V441.50H1401.05V474.50H1401.30V441.50H1403.55V408.50H1404.05V441.50H1404.30V491.00H1404.55V441.50H1405.05V474.50H1405.80V441.50H1406.30V474.50H1407.05V441.50H1407.55V474.50H1408.05V441.50H1408.55V474.50H1409.05V441.50H1412.05V458.00H1413.05V474.50H1413.80V458.00H1414.05V474.50H1415.05V491.00H1415.80V474.50H1416.30V491.00H1416.80V474.50H1417.30V491.00H1417.80V474.50H1418.55V491.00H1419.30V474.50H1420.05V441.50H1420.30V491.00H1420.55V474.50H1421.05V491.00H1421.80V474.50H1422.30V491.00H1423.05V474.50H1423.80V491.00H1424.30V474.50H1424.80V491.00H1426.30V507.50H1427.05V491.00H1428.05V507.50H1428.30V524.00H1435.30V540.50H1436.30V524.00H1437.30V540.50H1438.30V524.00H1438.55V540.50H1440.05V524.00H1440.80V540.50H1441.80V524.00H1442.55V540.50H1443.80V524.00H1444.30V540.50H1445.05V524.00H1445.55V540.50H1450.55V524.00H1451.80V540.50H1455.80V524.00H1457.30V540.50H1753.80" fill="none" stroke="#0000ff" stroke-width="1"/>
<rect x="1652.5" y="319.5" width="14" height="11" fill="#fff" stroke="#ccc" stroke-width="1"/>
<rect x="1653" y="321" width="12" height="8" fill="#0000ff"/>
<text x="1670.90" y="328.70" font-family="Liberation Serif" font-size="11.5" font-weight="normal" fill="#808080" text-anchor="start" textLength="75.00" lengthAdjust="spacingAndGlyphs">aida04 1.8.L</text>
<path d="M1754 298.8 L1765.2 310 L1754 321.2 L1742.8 310 Z" fill="#ff0000"/>
<rect x="275" y="580" width="1" height="232" fill="#e4e4e4"/>
<rect x="378" y="580" width="1" height="232" fill="#e4e4e4"/>
<rect x="481" y="580" width="1" height="232" fill="#e4e4e4"/>
<rect x="584" y="580" width="1" height="232" fill="#e4e4e4"/>
<rect x="687" y="580" width="1" height="232" fill="#e4e4e4"/>
<rect x="790" y="580" width="1" height="232" fill="#e4e4e4"/>
<rect x="180" y="770" width="623" height="1" fill="#e4e4e4"/>
<rect x="180" y="729" width="623" height="1" fill="#e4e4e4"/>
<rect x="180" y="687" width="623" height="1" fill="#e4e4e4"/>
<rect x="180" y="646" width="623" height="1" fill="#e4e4e4"/>
<rect x="180" y="605" width="623" height="1" fill="#e4e4e4"/>
<text x="157.50" y="815.90" font-family="Liberation Serif" font-size="11.5" font-weight="normal" fill="#555" text-anchor="start" textLength="18.50" lengthAdjust="spacingAndGlyphs">0.0</text>
<text x="157.50" y="774.65" font-family="Liberation Serif" font-size="11.5" font-weight="normal" fill="#555" text-anchor="start" textLength="18.50" lengthAdjust="spacingAndGlyphs">2.5</text>
<text x="157.50" y="733.40" font-family="Liberation Serif" font-size="11.5" font-weight="normal" fill="#555" text-anchor="start" textLength="18.50" lengthAdjust="spacingAndGlyphs">5.0</text>
<text x="157.50" y="692.15" font-family="Liberation Serif" font-size="11.5" font-weight="normal" fill="#555" text-anchor="start" textLength="18.50" lengthAdjust="spacingAndGlyphs">7.5</text>
<text x="150.50" y="650.90" font-family="Liberation Serif" font-size="11.5" font-weight="normal" fill="#555" text-anchor="start" textLength="25.50" lengthAdjust="spacingAndGlyphs">10.0</text>
<text x="151.00" y="609.65" font-family="Liberation Serif" font-size="11.5" font-weight="normal" fill="#555" text-anchor="start" textLength="25.00" lengthAdjust="spacingAndGlyphs">12.5</text>
<text x="256.87" y="827.00" font-family="Liberation Serif" font-size="11.5" font-weight="normal" fill="#555" text-anchor="start" textLength="37.30" lengthAdjust="spacingAndGlyphs">40000</text>
<text x="359.93" y="827.00" font-family="Liberation Serif" font-size="11.5" font-weight="normal" fill="#555" text-anchor="start" textLength="37.30" lengthAdjust="spacingAndGlyphs">45000</text>
<text x="462.99" y="827.00" font-family="Liberation Serif" font-size="11.5" font-weight="normal" fill="#555" text-anchor="start" textLength="37.30" lengthAdjust="spacingAndGlyphs">50000</text>
<text x="566.05" y="827.00" font-family="Liberation Serif" font-size="11.5" font-weight="normal" fill="#555" text-anchor="start" textLength="37.30" lengthAdjust="spacingAndGlyphs">55000</text>
<text x="669.11" y="827.00" font-family="Liberation Serif" font-size="11.5" font-weight="normal" fill="#555" text-anchor="start" textLength="37.30" lengthAdjust="spacingAndGlyphs">60000</text>
<text x="772.17" y="827.00" font-family="Liberation Serif" font-size="11.5" font-weight="normal" fill="#555" text-anchor="start" textLength="37.30" lengthAdjust="spacingAndGlyphs">65000</text>
<rect x="180" y="580" width="623" height="232" fill="none" stroke="#808080" stroke-width="2"/>
<path d="M180.30 811.50H181.05V795.00H184.05V811.50H185.80V795.00H187.30V811.50H188.55V795.00H189.30V811.50H190.80V795.00H191.05V811.50H192.80V795.00H193.55V811.50H195.05V795.00H195.80V811.50H197.05V795.00H197.30V811.50H198.55V795.00H199.05V811.50H200.55V795.00H201.05V811.50H202.30V795.00H202.80V811.50H204.05V795.00H204.80V811.50H206.80V795.00H207.80V811.50H208.55V795.00H209.30V811.50H211.05V795.00H211.55V811.50H212.30V795.00H213.55V811.50H222.05V795.00H222.55V811.50H223.55V795.00H224.05V811.50H225.55V795.00H226.05V811.50H227.55V795.00H228.30V811.50H229.30V795.00H230.80V811.50H232.55V795.00H233.55V811.50H234.80V795.00H235.05V811.50H236.55V795.00H237.05V811.50H243.30V795.00H244.80V811.50H246.05V795.00H247.05V811.50H248.05V795.00H248.80V811.50H251.55V795.00H252.80V811.50H256.30V795.00H256.80V811.50H258.30V795.00H259.55V811.50H260.30V795.00H261.80V811.50H263.55V795.00H263.80V811.50H270.80V795.00H271.30V811.50H272.80V795.00H273.55V811.50H274.30V795.00H274.80V811.50H275.55V795.00H276.30V811.50H277.30V795.00H277.80V811.50H279.30V795.00H280.30V811.50H281.30V795.00H281.80V811.50H283.05V795.00H283.55V811.50H284.55V795.00H285.55V811.50H286.80V795.00H288.30V811.50H294.30V795.00H295.80V811.50H297.05V795.00H297.55V811.50H303.05V795.00H304.05V811.50H305.30V795.00H306.30V811.50H307.30V795.00H307.80V811.50H309.30V795.00H310.05V811.50H311.80V795.00H312.05V811.50H313.05V795.00H314.55V811.50H316.30V795.00H317.05V811.50H317.80V795.00H318.80V811.50H320.55V795.00H321.05V811.50H321.80V795.00H322.30V811.50H323.30V795.00H324.80V811.50H326.30V795.00H326.55V811.50H327.55V795.00H328.05V811.50H329.05V795.00H329.55V811.50H330.80V795.00H331.80V811.50H333.55V795.00H333.80V811.50H334.55V795.00H335.55V811.50H336.05V795.00H336.55V811.50H337.30V795.00H337.80V811.50H339.30V795.00H339.80V811.50H341.05V795.00H341.55V811.50H342.55V795.00H343.30V811.50H344.55V795.00H345.05V811.50H347.05V795.00H348.55V811.50H350.05V795.00H350.55V811.50H352.55V795.00H353.05V811.50H354.55V795.00H355.05V811.50H356.55V795.00H357.30V811.50H358.30V795.00H358.80V811.50H359.55V795.00H360.05V811.50H361.55V795.00H362.05V811.50H363.30V795.00H363.80V811.50H365.05V795.00H366.05V811.50H367.80V795.00H368.30V811.50H370.05V795.00H371.55V811.50H372.80V795.00H373.30V811.50H374.80V795.00H375.05V811.50H376.30V795.00H377.80V811.50H378.55V795.00H379.30V811.50H380.80V795.00H381.05V811.50H382.05V795.00H382.55V811.50H384.05V795.00H385.55V811.50H387.55V795.00H388.05V811.50H389.55V795.00H389.80V811.50H390.55V795.00H391.05V811.50H393.05V795.00H393.30V811.50H394.30V795.00H394.80V811.50H396.30V795.00H397.80V811.50H399.30V795.00H400.30V811.50H401.80V795.00H402.30V811.50H403.80V795.00H404.55V811.50H406.05V795.00H406.80V811.50H407.55V795.00H408.30V811.50H409.55V795.00H409.80V811.50H411.05V795.00H411.30V811.50H412.55V795.00H413.05V811.50H413.80V795.00H415.30V811.50H415.55V795.00H416.05V778.50H416.80V795.00H417.30V778.50H417.80V795.00H418.30V778.50H418.80V795.00H419.05V778.50H422.55V745.50H423.55V778.50H424.05V712.50H425.05V745.50H425.80V712.50H426.05V663.00H427.05V679.50H427.55V663.00H428.55V646.50H429.05V679.50H429.55V646.50H430.30V679.50H430.80V630.00H431.30V646.50H432.05V630.00H432.80V646.50H433.55V597.00H434.05V630.00H434.80V646.50H435.30V630.00H435.80V646.50H436.80V663.00H437.05V729.00H437.55V762.00H438.30V729.00H438.80V762.00H439.30V729.00H440.30V762.00H441.55V778.50H442.30V762.00H442.80V778.50H443.30V762.00H444.05V778.50H444.55V795.00H445.05V778.50H445.55V795.00H446.30V778.50H447.30V795.00H448.05V778.50H448.55V795.00H449.05V778.50H449.55V795.00H450.30V778.50H451.30V795.00H455.30V811.50H456.55V795.00H458.05V811.50H459.05V795.00H459.55V811.50H460.80V795.00H461.30V811.50H465.55V795.00H466.80V811.50H801.80" fill="none" stroke="#0000ff" stroke-width="1"/>
<rect x="700.5" y="590.5" width="14" height="11" fill="#fff" stroke="#ccc" stroke-width="1"/>
<rect x="701" y="592" width="12" height="8" fill="#0000ff"/>
<text x="718.90" y="599.70" font-family="Liberation Serif" font-size="11.5" font-weight="normal" fill="#808080" text-anchor="start" textLength="75.00" lengthAdjust="spacingAndGlyphs">aida06 1.8.L</text>
<path d="M802 569.8 L813.2 581 L802 592.2 L790.8 581 Z" fill="#ff0000"/>
<rect x="1227" y="580" width="1" height="232" fill="#e4e4e4"/>
<rect x="1330" y="580" width="1" height="232" fill="#e4e4e4"/>
<rect x="1433" y="580" width="1" height="232" fill="#e4e4e4"/>
<rect x="1536" y="580" width="1" height="232" fill="#e4e4e4"/>
<rect x="1639" y="580" width="1" height="232" fill="#e4e4e4"/>
<rect x="1742" y="580" width="1" height="232" fill="#e4e4e4"/>
<rect x="1132" y="770" width="623" height="1" fill="#e4e4e4"/>
<rect x="1132" y="729" width="623" height="1" fill="#e4e4e4"/>
<rect x="1132" y="687" width="623" height="1" fill="#e4e4e4"/>
<rect x="1132" y="646" width="623" height="1" fill="#e4e4e4"/>
<rect x="1132" y="605" width="623" height="1" fill="#e4e4e4"/>
<text x="1109.50" y="815.90" font-family="Liberation Serif" font-size="11.5" font-weight="normal" fill="#555" text-anchor="start" textLength="18.50" lengthAdjust="spacingAndGlyphs">0.0</text>
<text x="1109.50" y="774.65" font-family="Liberation Serif" font-size="11.5" font-weight="normal" fill="#555" text-anchor="start" textLength="18.50" lengthAdjust="spacingAndGlyphs">2.5</text>
<text x="1109.50" y="733.40" font-family="Liberation Serif" font-size="11.5" font-weight="normal" fill="#555" text-anchor="start" textLength="18.50" lengthAdjust="spacingAndGlyphs">5.0</text>
<text x="1109.50" y="692.15" font-family="Liberation Serif" font-size="11.5" font-weight="normal" fill="#555" text-anchor="start" textLength="18.50" lengthAdjust="spacingAndGlyphs">7.5</text>
<text x="1102.50" y="650.90" font-family="Liberation Serif" font-size="11.5" font-weight="normal" fill="#555" text-anchor="start" textLength="25.50" lengthAdjust="spacingAndGlyphs">10.0</text>
<text x="1103.00" y="609.65" font-family="Liberation Serif" font-size="11.5" font-weight="normal" fill="#555" text-anchor="start" textLength="25.00" lengthAdjust="spacingAndGlyphs">12.5</text>
<text x="1208.87" y="827.00" font-family="Liberation Serif" font-size="11.5" font-weight="normal" fill="#555" text-anchor="start" textLength="37.30" lengthAdjust="spacingAndGlyphs">40000</text>
<text x="1311.93" y="827.00" font-family="Liberation Serif" font-size="11.5" font-weight="normal" fill="#555" text-anchor="start" textLength="37.30" lengthAdjust="spacingAndGlyphs">45000</text>
<text x="1414.99" y="827.00" font-family="Liberation Serif" font-size="11.5" font-weight="normal" fill="#555" text-anchor="start" textLength="37.30" lengthAdjust="spacingAndGlyphs">50000</text>
<text x="1518.05" y="827.00" font-family="Liberation Serif" font-size="11.5" font-weight="normal" fill="#555" text-anchor="start" textLength="37.30" lengthAdjust="spacingAndGlyphs">55000</text>
<text x="1621.11" y="827.00" font-family="Liberation Serif" font-size="11.5" font-weight="normal" fill="#555" text-anchor="start" textLength="37.30" lengthAdjust="spacingAndGlyphs">60000</text>
<text x="1724.17" y="827.00" font-family="Liberation Serif" font-size="11.5" font-weight="normal" fill="#555" text-anchor="start" textLength="37.30" lengthAdjust="spacingAndGlyphs">65000</text>
<rect x="1132" y="580" width="623" height="232" fill="none" stroke="#808080" stroke-width="2"/>
<path d="M1132.30 762.00H1133.05V778.50H1133.80V795.00H1134.30V778.50H1135.30V795.00H1135.80V778.50H1136.30V795.00H1136.80V778.50H1137.30V795.00H1137.80V778.50H1138.55V795.00H1139.05V778.50H1139.80V795.00H1140.80V811.50H1148.30V795.00H1149.30V811.50H1151.05V795.00H1151.30V811.50H1154.30V795.00H1154.55V811.50H1155.80V795.00H1156.30V811.50H1157.30V795.00H1158.05V811.50H1160.05V795.00H1160.55V811.50H1161.55V795.00H1162.05V811.50H1164.05V795.00H1165.05V811.50H1169.80V795.00H1170.30V811.50H1173.80V795.00H1174.30V811.50H1175.05V795.00H1175.80V811.50H1178.55V795.00H1180.05V811.50H1182.55V795.00H1183.05V811.50H1186.30V795.00H1186.80V811.50H1188.05V795.00H1188.30V811.50H1190.30V795.00H1191.80V811.50H1196.05V795.00H1196.55V811.50H1198.80V795.00H1199.30V811.50H1200.55V795.00H1200.80V811.50H1204.80V795.00H1205.05V811.50H1206.55V795.00H1207.30V811.50H1208.80V795.00H1209.05V811.50H1210.30V795.00H1210.80V811.50H1212.55V795.00H1214.05V811.50H1215.80V795.00H1216.05V811.50H1221.30V795.00H1221.80V811.50H1223.80V795.00H1224.30V811.50H1229.30V795.00H1230.80V811.50H1232.05V795.00H1232.80V811.50H1237.05V795.00H1237.80V811.50H1239.30V795.00H1239.55V811.50H1245.80V795.00H1246.30V811.50H1248.55V795.00H1249.05V811.50H1255.30V795.00H1255.80V811.50H1257.30V795.00H1258.30V811.50H1260.30V795.00H1260.80V811.50H1265.30V795.00H1265.80V811.50H1267.80V795.00H1268.05V811.50H1270.05V795.00H1270.55V811.50H1271.80V795.00H1272.05V811.50H1276.80V795.00H1277.80V811.50H1279.30V795.00H1280.80V811.50H1287.05V795.00H1288.05V811.50H1289.05V795.00H1289.55V811.50H1295.30V795.00H1295.80V811.50H1297.30V795.00H1297.80V811.50H1298.80V795.00H1299.80V811.50H1301.05V795.00H1301.30V811.50H1302.30V795.00H1303.80V811.50H1304.80V795.00H1305.80V811.50H1307.05V795.00H1307.55V811.50H1308.55V795.00H1309.30V811.50H1313.80V795.00H1314.30V811.50H1315.55V795.00H1317.05V811.50H1318.55V795.00H1319.30V811.50H1320.30V795.00H1321.30V811.50H1323.05V795.00H1323.80V811.50H1325.80V795.00H1326.55V811.50H1328.05V795.00H1328.55V811.50H1330.05V795.00H1330.30V811.50H1332.05V795.00H1333.05V811.50H1337.30V795.00H1337.55V811.50H1338.30V795.00H1338.55V811.50H1340.05V795.00H1341.05V811.50H1341.80V795.00H1342.55V811.50H1343.55V795.00H1344.30V811.50H1345.30V795.00H1345.55V811.50H1346.30V795.00H1347.05V811.50H1349.30V795.00H1349.80V811.50H1356.30V795.00H1356.80V811.50H1358.05V795.00H1359.05V811.50H1361.55V795.00H1362.30V811.50H1363.55V795.00H1364.30V811.50H1368.55V795.00H1369.55V811.50H1370.55V795.00H1370.80V811.50H1371.80V795.00H1372.30V811.50H1374.05V795.00H1374.80V811.50H1376.30V795.00H1376.80V811.50H1378.05V795.00H1378.30V811.50H1380.05V795.00H1380.80V811.50H1381.55V795.00H1382.55V811.50H1384.55V795.00H1385.05V811.50H1386.55V795.00H1387.05V811.50H1388.30V795.00H1388.55V811.50H1390.05V795.00H1391.05V811.50H1391.80V795.00H1394.55V778.50H1395.30V795.00H1396.05V762.00H1396.30V778.50H1396.80V795.00H1397.30V778.50H1397.80V795.00H1398.30V778.50H1398.80V795.00H1399.55V778.50H1403.55V762.00H1404.55V778.50H1405.30V762.00H1405.80V778.50H1406.30V745.50H1407.30V729.00H1408.30V745.50H1408.80V729.00H1409.30V745.50H1409.55V679.50H1410.05V712.50H1410.55V679.50H1411.05V663.00H1411.80V679.50H1412.30V646.50H1414.30V630.00H1417.55V663.00H1418.05V630.00H1419.05V663.00H1419.80V679.50H1420.30V663.00H1420.55V679.50H1421.30V712.50H1421.80V729.00H1422.30V712.50H1422.80V729.00H1423.30V745.50H1424.55V762.00H1425.30V745.50H1425.80V762.00H1426.05V778.50H1430.05V795.00H1430.80V778.50H1431.80V795.00H1432.55V778.50H1433.05V795.00H1433.55V778.50H1434.30V795.00H1435.05V811.50H1436.05V795.00H1437.05V811.50H1438.55V795.00H1438.80V811.50H1439.55V795.00H1439.80V811.50H1441.30V795.00H1441.80V811.50H1442.80V795.00H1443.05V811.50H1443.80V795.00H1445.30V811.50H1446.30V795.00H1446.80V811.50H1448.55V795.00H1449.05V811.50H1753.80" fill="none" stroke="#0000ff" stroke-width="1"/>
<rect x="1216.9" y="581" width="1.3" height="230" fill="#555"/>
<rect x="1133" y="599.8" width="621" height="1.3" fill="#555"/>
<rect x="1652.5" y="590.5" width="14" height="11" fill="#fff" stroke="#ccc" stroke-width="1"/>
<rect x="1653" y="592" width="12" height="8" fill="#0000ff"/>
<text x="1670.90" y="599.70" font-family="Liberation Serif" font-size="11.5" font-weight="normal" fill="#808080" text-anchor="start" textLength="75.00" lengthAdjust="spacingAndGlyphs">aida08 1.8.L</text>
<path d="M1754 569.8 L1765.2 581 L1754 592.2 L1742.8 581 Z" fill="#ff0000"/>
<defs><linearGradient id="gGreenV" x1="0" y1="0" x2="0" y2="1"><stop offset="0" stop-color="#e2f09a"/><stop offset="0.45" stop-color="#a8d234"/><stop offset="0.55" stop-color="#86c010"/><stop offset="1" stop-color="#62a000"/></linearGradient><linearGradient id="gGreenL" x1="0" y1="0" x2="1" y2="0"><stop offset="0" stop-color="#62a000"/><stop offset="0.5" stop-color="#86c010"/><stop offset="0.55" stop-color="#b0d840"/><stop offset="1" stop-color="#e2f09a"/></linearGradient><linearGradient id="gGreenH" x1="0" y1="0" x2="1" y2="0"><stop offset="0" stop-color="#e2f09a"/><stop offset="0.45" stop-color="#b0d840"/><stop offset="0.5" stop-color="#86c010"/><stop offset="1" stop-color="#62a000"/></linearGradient><radialGradient id="gBtnBlue" cx="0.5" cy="0.5" r="0.5"><stop offset="0" stop-color="#1fb0f5"/><stop offset="0.78" stop-color="#0a90e6"/><stop offset="0.86" stop-color="#7fd0ff"/><stop offset="0.92" stop-color="#1a8ae0"/><stop offset="1" stop-color="#0a56b0"/></radialGradient><radialGradient id="gLens2" cx="0.45" cy="0.4" r="0.6"><stop offset="0" stop-color="#ffffff"/><stop offset="1" stop-color="#e0e0e0"/></radialGradient><linearGradient id="gRef" x1="0" y1="0" x2="0" y2="1"><stop offset="0" stop-color="#b8e0ff"/><stop offset="0.5" stop-color="#62aef0"/><stop offset="1" stop-color="#1a6ad0"/></linearGradient><radialGradient id="gShadow" cx="0.5" cy="0.5" r="0.5"><stop offset="0" stop-color="#000" stop-opacity="0.28"/><stop offset="1" stop-color="#000" stop-opacity="0"/></radialGradient><radialGradient id="gYel" cx="0.5" cy="0.3" r="0.8"><stop offset="0" stop-color="#ffe860"/><stop offset="1" stop-color="#e8b000"/></radialGradient><radialGradient id="gBlk" cx="0.5" cy="0.3" r="0.8"><stop offset="0" stop-color="#505050"/><stop offset="1" stop-color="#0a0a0a"/></radialGradient></defs>
<ellipse cx="21.6" cy="239.5" rx="10" ry="2" fill="url(#gShadow)"/>
<path d="M21.65 228.2 L27.45 218.15 A11.6 11.6 0 0 1 33.25 228.20 Z" fill="url(#gBlk)"/>
<path d="M21.65 228.2 L33.25 228.20 A11.6 11.6 0 0 1 27.45 238.25 Z" fill="url(#gYel)"/>
<path d="M21.65 228.2 L27.45 238.25 A11.6 11.6 0 0 1 15.85 238.25 Z" fill="url(#gBlk)"/>
<path d="M21.65 228.2 L15.85 238.25 A11.6 11.6 0 0 1 10.05 228.20 Z" fill="url(#gYel)"/>
<path d="M21.65 228.2 L10.05 228.20 A11.6 11.6 0 0 1 15.85 218.15 Z" fill="url(#gBlk)"/>
<path d="M21.65 228.2 L15.85 218.15 A11.6 11.6 0 0 1 27.45 218.15 Z" fill="url(#gYel)"/>
<rect x="10.049999999999999" y="228.0" width="23.2" height="0.9" fill="#1a1a30" opacity="0.7"/>
<circle cx="21.65" cy="228.2" r="11.1" fill="none" stroke="#000" stroke-opacity="0.35" stroke-width="1"/>
<path d="M14.649999999999999 220.7 A10 10 0 0 1 28.65 220.7" fill="none" stroke="#fff" stroke-opacity="0.55" stroke-width="1"/>
<ellipse cx="78.5" cy="239.5" rx="10" ry="1.8" fill="url(#gShadow)"/>
<path d="M73.69 236.28 A9.6 9.6 0 0 1 72.83 219.84" fill="none" stroke="#1b62c4" stroke-width="5.6" stroke-linecap="butt"/>
<path d="M73.69 236.28 A9.6 9.6 0 0 1 72.83 219.84" fill="none" stroke="url(#gRef)" stroke-width="3.8" stroke-linecap="butt"/>
<path d="M68.3 217.0 L78.0 216.8 L75.8 226.0 Z" fill="url(#gRef)" stroke="#1b62c4" stroke-width="0.9" stroke-linejoin="round"/>
<path d="M82.71 219.32 A9.6 9.6 0 0 1 83.57 235.76" fill="none" stroke="#1b62c4" stroke-width="5.6" stroke-linecap="butt"/>
<path d="M82.71 219.32 A9.6 9.6 0 0 1 83.57 235.76" fill="none" stroke="url(#gRef)" stroke-width="3.8" stroke-linecap="butt"/>
<path d="M79.0 238.4 L88.3 238.4 L80.6 229.6 Z" fill="#2a7ad8" stroke="#1b62c4" stroke-width="0.9" stroke-linejoin="round"/>
<ellipse cx="165.8" cy="239.2" rx="9" ry="1.6" fill="url(#gShadow)"/>
<path d="M166.10 229.60 L175.00 238.10" stroke="#000" stroke-width="3.6" stroke-linecap="round"/>
<path d="M166.60 229.40 L174.80 237.20" stroke="#fff" stroke-width="0.8" stroke-opacity="0.8"/>
<circle cx="159.8" cy="223.3" r="7.2" fill="url(#gLens2)" stroke="#b8b8b8" stroke-width="2.2"/>
<circle cx="159.8" cy="223.3" r="8.3" fill="none" stroke="#909090" stroke-width="0.6"/>
<circle cx="159.8" cy="223.3" r="6.0" fill="none" stroke="#a0a0a0" stroke-width="0.5"/>
<path d="M169.1 214 H172.8 V218.2 H177 V221.9 H172.8 V226.6 H169.1 V221.9 H164.3 V218.2 H169.1 Z" fill="#b4d824" stroke="#4e9a06" stroke-width="0.9" stroke-linejoin="round"/>
<ellipse cx="222.7" cy="239.2" rx="9" ry="1.6" fill="url(#gShadow)"/>
<path d="M223.00 229.60 L231.90 238.10" stroke="#000" stroke-width="3.6" stroke-linecap="round"/>
<path d="M223.50 229.40 L231.70 237.20" stroke="#fff" stroke-width="0.8" stroke-opacity="0.8"/>
<circle cx="216.7" cy="223.3" r="7.2" fill="url(#gLens2)" stroke="#b8b8b8" stroke-width="2.2"/>
<circle cx="216.7" cy="223.3" r="8.3" fill="none" stroke="#909090" stroke-width="0.6"/>
<circle cx="216.7" cy="223.3" r="6.0" fill="none" stroke="#a0a0a0" stroke-width="0.5"/>
<rect x="221.6" y="218.2" width="12.2" height="3.7" rx="1.2" fill="#ef5a5a" stroke="#b00000" stroke-width="0.9"/>
<ellipse cx="266.05" cy="227.5" rx="1.4" ry="9" fill="url(#gShadow)"/>
<circle cx="277.75" cy="227.5" r="11.6" fill="url(#gBtnBlue)"/>
<circle cx="277.75" cy="227.5" r="11.3" fill="none" stroke="#0a56b0" stroke-width="0.7"/>
<path d="M273.85 221.2 L281.15 221.2 L277.5 227.6 Z M273.85 227.7 L281.15 227.7 L277.5 234.2 Z" fill="#3a3a3a"/>
<ellipse cx="348.0" cy="227.5" rx="1.4" ry="9" fill="url(#gShadow)"/>
<circle cx="336.3" cy="227.5" r="11.6" fill="url(#gBtnBlue)"/>
<circle cx="336.3" cy="227.5" r="11.3" fill="none" stroke="#0a56b0" stroke-width="0.7"/>
<path d="M333.0 227.3 L340.0 227.3 L336.5 220.7 Z M333.0 233.9 L340.0 233.9 L336.5 227.3 Z" fill="#3a3a3a"/>
<ellipse cx="381.6" cy="228" rx="1.4" ry="10" fill="url(#gShadow)"/>
<path d="M381.5 227.6 L390.7 218.2 L390.7 222.2 L404.5 222.2 L404.5 233.5 L390.7 233.5 L390.7 237.7 Z" fill="url(#gGreenL)" stroke="#5c9c00" stroke-width="1" stroke-linejoin="round"/>
<ellipse cx="452" cy="236.8" rx="12" ry="1.6" fill="url(#gShadow)"/>
<path d="M464.2 226.3 L451.0 216.5 L451.0 221.1 L437.2 221.1 L437.2 232.0 L451.0 232.0 L451.0 236.2 Z" fill="url(#gGreenV)" stroke="#5c9c00" stroke-width="1" stroke-linejoin="round"/>
<ellipse cx="508" cy="239.2" rx="10" ry="1.6" fill="url(#gShadow)"/>
<path d="M507.9 215.9 L517.6 226.5 L513.6 226.5 L513.6 239.2 L502.1 239.2 L502.1 226.5 L498.0 226.5 Z" fill="url(#gGreenV)" stroke="#5c9c00" stroke-width="1" stroke-linejoin="round"/>
<ellipse cx="573.2" cy="228" rx="1.4" ry="11" fill="url(#gShadow)"/>
<path d="M563.6 241.8 L573.3 228.0 L568.7 228.0 L568.7 214.2 L557.8 214.2 L557.8 228.0 L553.2 228.0 Z" fill="url(#gGreenH)" stroke="#5c9c00" stroke-width="1" stroke-linejoin="round"/>
<rect x="1813" y="2" width="58" height="58" fill="#f5c400"/>
<circle cx="1821.4" cy="8.3" r="5.5" fill="#0c2a66"/>
<path d="M1818.2 11.0 L1821.4 5.8 L1824.6 11.0 Z" fill="#e8f0ff"/>
<path d="M1857.5 3.2 H1865.1 V8.2 Q1865.1 11.4 1861.3 12.9 Q1857.5 11.4 1857.5 8.2 Z" fill="#2448c8" stroke="#0c2a80" stroke-width="0.5"/>
<path d="M1859.5 6 H1863 M1859.8 8.5 H1862.8" stroke="#dde6ff" stroke-width="0.9"/>
<text x="1816.0" y="34.1" font-family="Liberation Serif" font-weight="bold" font-size="28" fill="#000" textLength="24.3" lengthAdjust="spacingAndGlyphs">M</text>
<text x="1839.4" y="31.8" font-family="Liberation Sans" font-weight="bold" font-size="12.6" fill="#000" textLength="29.5" lengthAdjust="spacingAndGlyphs">idas</text>
<text x="1816.9" y="44.0" font-family="Liberation Sans" font-weight="bold" font-size="3.6" fill="#000" textLength="18.2" lengthAdjust="spacingAndGlyphs">powered by</text>
<rect x="1842.9" y="37.9" width="12.9" height="18.9" fill="#d42a10" stroke="#f0e000" stroke-width="0.4"/>
<path d="M1850.2 41 Q1847.5 45 1848.3 53 Q1851.2 47 1851.6 41.5 Z" fill="#2a60d0"/>
<rect x="1844.5" y="53.5" width="9.5" height="1.3" fill="#f0c0a0" opacity="0.8"/>
<path d="M1876.3 40 L1878.3 40 L1878 52 L1876 52 Z" fill="#1648c0"/>
<path d="M1878.5 3.3 L1897 2.6 L1910.6 4.0 L1910.3 50.7 L1878.3 50.5 Z" fill="#d43c08"/>
<path d="M1876.1 51.0 L1907.8 51.2 L1907.3 58.8 L1876.3 58.2 Z" fill="#1444b8"/>
<path d="M1909.9 12.7 L1912.3 12.9 L1912.0 27.6 L1909.7 27.2 Z" fill="#1648c0"/>
<path d="M1899.8 8.0 Q1893.5 9.5 1890.0 17 Q1888.3 23 1889.3 33 Q1890.3 42 1894.2 48.5 Q1897.3 40 1897.8 30 Q1898.3 24 1896.8 21 Q1899.2 19 1900.5 14 Q1901.2 10 1899.8 8.0 Z" fill="#2450c8" stroke="#e8e8ff" stroke-width="0.4"/>
<path d="M1893.5 22 Q1894.3 35 1894.5 47" fill="none" stroke="#f0f0ff" stroke-width="0.5"/>
<path d="M1886.5 5 Q1885.3 9 1886.5 14 M1889.8 4.5 Q1888.6 8 1889.6 12" fill="none" stroke="#f5c400" stroke-width="1"/>
<path d="M1904.5 12.5 Q1903.8 16 1902.6 19 M1907.3 12.8 Q1907 14.5 1906.3 16" fill="none" stroke="#f5c400" stroke-width="1"/>
<text x="1879.9" y="48.3" font-family="Liberation Sans" font-weight="bold" font-size="5.8" fill="#ffffff" textLength="12.8" lengthAdjust="spacingAndGlyphs">TCL</text>
<text x="1881" y="56.0" font-family="Liberation Sans" font-weight="bold" font-size="4.8" fill="#f0e020" textLength="25.1" lengthAdjust="spacingAndGlyphs">POWERED</text>
</svg>
</body></html>
